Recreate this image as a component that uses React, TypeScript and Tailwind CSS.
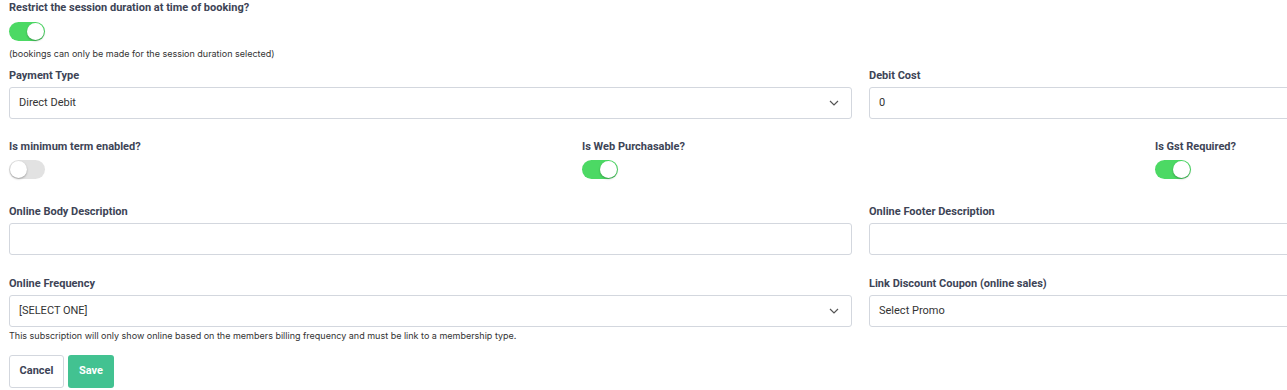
import React from "react";

const Toggle: React.FC<{ on?: boolean }> = ({ on }) => (
    <div
        className={`relative h-[19px] w-[36px] rounded-full ${on ? "bg-[#4cd964]" : "bg-[#e2e2e2]"}`}
    >
        <div
            className={`absolute top-[1px] h-[17px] w-[17px] rounded-full bg-white shadow-[0_1px_2px_rgba(0,0,0,0.3)] ${on ? "right-[1px]" : "left-[1px]"}`}
        />
    </div>
);

const Label: React.FC<{ children: React.ReactNode }> = ({ children }) => (
    <div className="pt-[1px] font-[Roboto,'Liberation_Sans',sans-serif] text-[11px] leading-[14px] font-bold text-[#3d4456]">
        {children}
    </div>
);

const Box: React.FC<{ value?: string; select?: boolean }> = ({ value, select }) => (
    <div className="flex h-[32px] items-center justify-between rounded-[3px] border border-[#d3d7de] bg-white pl-[9px] pr-[12px] font-[Roboto,'Liberation_Sans',sans-serif] text-[11px] text-[#333]">
        <span>{value}</span>
        {select && (
            <svg width="10" height="6" viewBox="0 0 10 6" fill="none">
                <path d="M1 1l4 4 4-4" stroke="#555" strokeWidth="1.2" />
            </svg>
        )}
    </div>
);

export default function App() {
    return (
        <div className="w-[1287px] overflow-hidden bg-white font-[Inter,'Liberation_Sans',sans-serif]">
            <div className="w-[1721px] px-[9px] pb-[2px]">
                {/* Restrict session */}
                <Label>Restrict the session duration at time of booking?</Label>
                <div className="mt-[7px]">
                    <Toggle on />
                </div>
                <div className="mt-[7px] text-[9px] leading-[12px] text-[#333]">
                    (bookings can only be made for the session duration selected)
                </div>

                {/* Payment */}
                <div className="mt-[8px] grid grid-cols-2 gap-x-[17px]">
                    <div>
                        <Label>Payment Type</Label>
                        <div className="mt-[4px]">
                            <Box value="Direct Debit" select />
                        </div>
                    </div>
                    <div>
                        <Label>Debit Cost</Label>
                        <div className="mt-[4px]">
                            <Box value="0" />
                        </div>
                    </div>
                </div>

                {/* Toggles */}
                <div className="mt-[20px] grid grid-cols-3 gap-x-[16px]">
                    {[
                        { label: "Is minimum term enabled?", on: false },
                        { label: "Is Web Purchasable?", on: true },
                        { label: "Is Gst Required?", on: true },
                    ].map((t, i) => (
                        <div key={i}>
                            <Label>{t.label}</Label>
                            <div className="mt-[6px]">
                                <Toggle on={t.on} />
                            </div>
                        </div>
                    ))}
                </div>

                {/* Descriptions */}
                <div className="mt-[25px] grid grid-cols-2 gap-x-[17px]">
                    <div>
                        <Label>Online Body Description</Label>
                        <div className="mt-[4px]">
                            <Box />
                        </div>
                    </div>
                    <div>
                        <Label>Online Footer Description</Label>
                        <div className="mt-[4px]">
                            <Box />
                        </div>
                    </div>
                </div>

                {/* Frequency / coupon */}
                <div className="mt-[21px] grid grid-cols-2 gap-x-[17px]">
                    <div>
                        <Label>Online Frequency</Label>
                        <div className="mt-[4px]">
                            <Box value="[SELECT ONE]" select />
                        </div>
                        <div className="mt-[3px] text-[9px] leading-[12px] text-[#333]">
                            This subscription will only show online based on the members billing frequency and must be link to a membership type.
                        </div>
                    </div>
                    <div>
                        <Label>Link Discount Coupon (online sales)</Label>
                        <div className="mt-[4px]">
                            <Box value="Select Promo" />
                        </div>
                    </div>
                </div>

                {/* Buttons */}
                <div className="mt-[13px] flex gap-[4px] font-[Roboto,'Liberation_Sans',sans-serif]">
                    <button className="h-[33px] w-[55px] rounded-[3px] border border-[#d3d7de] bg-white text-[11px] font-bold text-[#3d4456]">
                        Cancel
                    </button>
                    <button className="h-[33px] w-[46px] rounded-[3px] bg-[#42c291] text-[11px] font-bold text-white">
                        Save
                    </button>
                </div>
            </div>
        </div>
    );
}
